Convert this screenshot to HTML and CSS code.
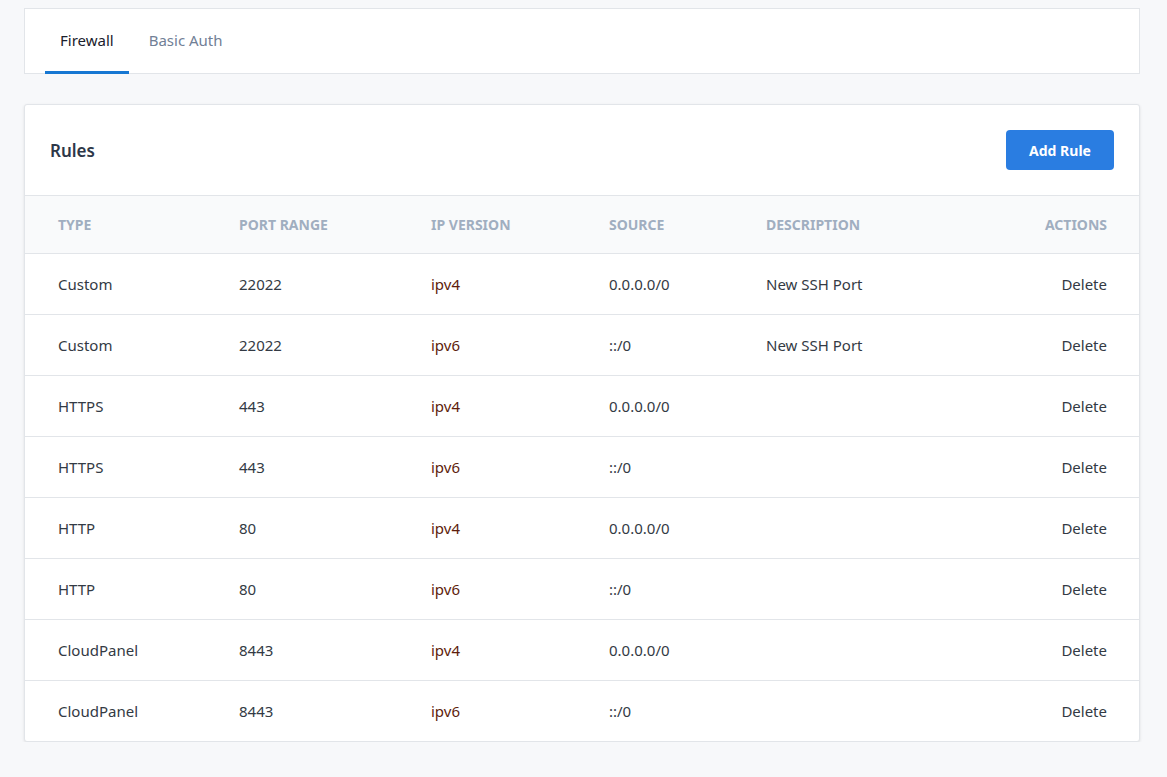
FILE: index.html
```html
<!DOCTYPE html>
<html>
<head>
  <title>Firewall</title>
  <link rel="stylesheet" href="styles.css">
</head>
<body>
  <div class="tabs">
    <a class="tab active">Firewall</a>
    <a class="tab">Basic Auth</a>
  </div>

  <div class="card">
    <div class="card-head">
      <h2>Rules</h2>
      <button class="btn">Add Rule</button>
    </div>
    <table class="rules">
      <colgroup>
        <col style="width:181px">
        <col style="width:192px">
        <col style="width:178px">
        <col style="width:157px">
        <col>
        <col style="width:150px">
      </colgroup>
      <thead>
        <tr>
          <th>Type</th>
          <th>Port Range</th>
          <th>IP Version</th>
          <th>Source</th>
          <th>Description</th>
          <th class="right">Actions</th>
        </tr>
      </thead>
      <tbody>
        <tr><td>Custom</td><td>22022</td><td class="ip">ipv4</td><td>0.0.0.0/0</td><td>New SSH Port</td><td class="right">Delete</td></tr>
        <tr><td>Custom</td><td>22022</td><td class="ip">ipv6</td><td>::/0</td><td>New SSH Port</td><td class="right">Delete</td></tr>
        <tr><td>HTTPS</td><td>443</td><td class="ip">ipv4</td><td>0.0.0.0/0</td><td></td><td class="right">Delete</td></tr>
        <tr><td>HTTPS</td><td>443</td><td class="ip">ipv6</td><td>::/0</td><td></td><td class="right">Delete</td></tr>
        <tr><td>HTTP</td><td>80</td><td class="ip">ipv4</td><td>0.0.0.0/0</td><td></td><td class="right">Delete</td></tr>
        <tr><td>HTTP</td><td>80</td><td class="ip">ipv6</td><td>::/0</td><td></td><td class="right">Delete</td></tr>
        <tr><td>CloudPanel</td><td>8443</td><td class="ip">ipv4</td><td>0.0.0.0/0</td><td></td><td class="right">Delete</td></tr>
        <tr><td>CloudPanel</td><td>8443</td><td class="ip">ipv6</td><td>::/0</td><td></td><td class="right">Delete</td></tr>
      </tbody>
    </table>
  </div>
</body>
</html>
```

FILE: styles.css
```css
html, body {
  margin: 0;
  padding: 0;
}

body {
  background: #f7f8fa;
  font-family: "Noto Sans", "Open Sans", sans-serif;
  font-size: 15px;
  color: #333a44;
  padding: 8px 27px 0 24px;
}

.tabs {
  display: flex;
  gap: 5px;
  height: 64px;
  padding: 0 20px;
  background: #fff;
  border: 1px solid #e2e5e9;
  box-sizing: content-box;
}

.tab {
  display: flex;
  align-items: center;
  padding: 0 15px;
  color: #718096;
  border-bottom: 3px solid transparent;
  margin-bottom: -1px;
  cursor: pointer;
}

.tab.active {
  color: #1a202c;
  border-bottom-color: #1677d2;
}

.card {
  margin-top: 30px;
  background: #fff;
  border: 1px solid #e2e5e9;
  border-radius: 3px;
  box-shadow: 0 1px 3px rgba(0, 0, 0, 0.1);
}

.card-head {
  display: flex;
  align-items: center;
  justify-content: space-between;
  height: 90px;
  padding: 0 25px;
  border-bottom: 1px solid #e2e5e9;
}

.card-head h2 {
  margin: 0;
  font-size: 17px;
  font-weight: 600;
  color: #2d3748;
}

.btn {
  width: 108px;
  height: 40px;
  border: none;
  border-radius: 4px;
  background: #2a7de1;
  color: #fff;
  font-family: inherit;
  font-size: 14px;
  font-weight: 700;
  cursor: pointer;
}

.rules {
  width: 100%;
  border-collapse: collapse;
  table-layout: fixed;
}

.rules th {
  height: 57px;
  padding: 0 0 0 33px;
  text-align: left;
  background: #f9fafb;
  color: #a0aec0;
  font-size: 14px;
  font-weight: 700;
  text-transform: uppercase;
  border-bottom: 1px solid #e2e5e9;
}

.rules td {
  height: 60px;
  padding: 0 0 0 33px;
  border-bottom: 1px solid #e2e5e9;
  white-space: nowrap;
}

.rules tr:last-child td {
  border-bottom: none;
}

.rules .right {
  text-align: right;
  padding-right: 32px;
}

.rules td.ip {
  color: #5e1d0c;
}
```
